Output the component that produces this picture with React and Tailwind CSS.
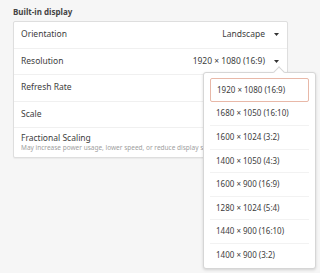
const rows = [
  { label: 'Orientation', value: 'Landscape' },
  { label: 'Resolution', value: '1920 × 1080 (16:9)' },
  { label: 'Refresh Rate' },
  { label: 'Scale' },
];

const options = [
  '1920 × 1080 (16:9)',
  '1680 × 1050 (16:10)',
  '1600 × 1024 (3:2)',
  '1400 × 1050 (4:3)',
  '1600 × 900 (16:9)',
  '1280 × 1024 (5:4)',
  '1440 × 900 (16:10)',
  '1400 × 900 (3:2)',
];

function Caret() {
  return (
    <svg width="5" height="3" viewBox="0 0 5 3" className="ml-[9px]">
      <path d="M0 0h5L2.5 3z" fill="#333" />
    </svg>
  );
}

export default function App() {
  return (
    <div
      className="relative w-[320px] h-[273px] bg-[#f6f6f6] text-[#3d3d3d] overflow-hidden"
      style={{ fontFamily: '"Noto Sans", "Open Sans", sans-serif' }}
    >
      <div className="pt-[6px] pl-[13px] text-[8px] font-bold leading-[11px] text-[#444]">Built-in display</div>

      <div className="mt-[4px] ml-[13px] w-[275px] bg-white border border-[#dedede] rounded-[2px] shadow-[0_1px_1px_rgba(0,0,0,0.05)]">
        {rows.map((r) => (
          <div key={r.label} className="h-[26.5px] flex items-center px-[7px] border-b border-[#f0f0f0] text-[8.5px]">
            <span className="flex-1">{r.label}</span>
            {r.value && (
              <span className="flex items-center pr-[1px]">
                {r.value}
                <Caret />
              </span>
            )}
          </div>
        ))}
        <div className="h-[29px] flex flex-col justify-center px-[7px]">
          <span className="text-[8.5px] leading-[10px]">Fractional Scaling</span>
          <span className="text-[6.5px] leading-[9px] text-[#a0a0a0] whitespace-nowrap overflow-hidden">
            May increase power usage, lower speed, or reduce display sharpness.
          </span>
        </div>
      </div>

      <div className="absolute left-[203px] top-[72px] w-[113px] bg-white border border-[#d6d6d6] rounded-[3px] shadow-[0_1px_3px_rgba(0,0,0,0.15)] pt-[5px] px-[6px] pb-[2px]">
        <div className="absolute -top-[5px] left-[71px] w-[8px] h-[8px] bg-white border-l border-t border-[#d6d6d6] rotate-45" />
        {options.map((o, i) => (
          <div
            key={o}
            className={`h-[23.5px] flex items-center px-[6px] text-[8px] ${
              i === 0 ? 'border border-[#e8b8a8] rounded-[2px]' : 'border-t border-[#f2f2f2]'
            } ${i === 1 ? 'border-t-0' : ''}`}
          >
            {o}
          </div>
        ))}
      </div>
    </div>
  );
}
